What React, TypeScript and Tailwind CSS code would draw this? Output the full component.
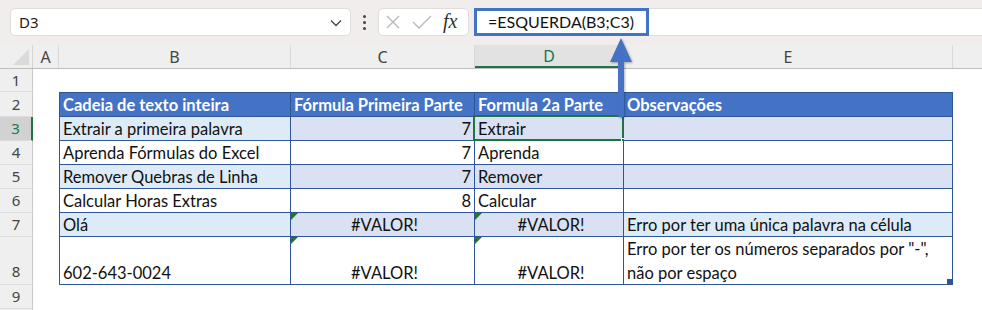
import React from "react"

const cellFont = { fontFamily: "Lato, 'Liberation Sans', sans-serif" }
const uiFont = { fontFamily: "'Noto Sans', 'Open Sans', sans-serif" }

const cols = [
  { key: "A", w: "w-[26px]" },
  { key: "B", w: "w-[232px]" },
  { key: "C", w: "w-[184px]" },
  { key: "D", w: "w-[149px]" },
  { key: "E", w: "w-[329px]" },
]

type Row = {
  n: number
  h: string
  cells: string[]
  fills?: string[]
  kind?: "head" | "err" | "tall"
}

const band = ["bg-[#ddebf7]", "bg-[#d9e1f2]", "bg-[#d9e1f2]", "bg-[#d9e1f2]"]

const rows: Row[] = [
  { n: 2, h: "h-[25px]", kind: "head", cells: ["Cadeia de texto inteira", "Fórmula Primeira Parte", "Formula 2a Parte", "Observações"] },
  { n: 3, h: "h-[24px]", cells: ["Extrair a primeira palavra", "7", "Extrair", ""], fills: band },
  { n: 4, h: "h-[24px]", cells: ["Aprenda Fórmulas do Excel", "7", "Aprenda", ""] },
  { n: 5, h: "h-[24px]", cells: ["Remover Quebras de Linha", "7", "Remover", ""], fills: band },
  { n: 6, h: "h-[24px]", cells: ["Calcular Horas Extras", "8", "Calcular", ""] },
  { n: 7, h: "h-[24px]", kind: "err", cells: ["Olá", "#VALOR!", "#VALOR!", "Erro por ter uma única palavra na célula"], fills: ["bg-[#ddebf7]", "bg-[#d9e1f2]", "bg-[#d9e1f2]", "bg-[#ddebf7]"] },
  { n: 8, h: "h-[48px]", kind: "tall", cells: ["602-643-0024", "#VALOR!", "#VALOR!", "Erro por ter os números separados por \"-\", não por espaço"] },
]

function ErrTri() {
  return <span className="absolute left-0 top-0 w-0 h-0 border-t-[7px] border-r-[7px] border-t-[#1e7b1e] border-r-transparent" />
}

function RowHead({ n, h, active }: { n: number | string; h: string; active?: boolean }) {
  return (
    <div
      className={`${h} w-[33px] shrink-0 flex justify-center border-b border-[#dcdcdc] text-[15px] ${
        active ? "bg-[#d2d2d2] text-[#217346] border-r-2 border-r-[#217346]" : "bg-[#efefef] text-[#444] border-r border-r-[#c8c8c8]"
      } ${n === 8 ? "items-end pb-[2px]" : "items-center"}`}
      style={uiFont}
    >
      {n}
    </div>
  )
}

export default function App() {
  return (
    <div className="relative w-[982px] h-[310px] overflow-hidden bg-white">
      {/* formula bar */}
      <div className="h-[45px] bg-[#f2eded] flex items-start pt-[8px] pl-[10px]">
        <div className="w-[341px] h-[28px] bg-white rounded-[5px] border border-[#e2dcdc] flex items-center justify-between pl-[8px] pr-[8px]" style={uiFont}>
          <span className="text-[15px] text-[#222]">D3</span>
          <svg width="12" height="8" viewBox="0 0 12 8" className="mt-[2px]">
            <path d="M1 1.5 L6 6.5 L11 1.5" stroke="#444" strokeWidth="1.3" fill="none" />
          </svg>
        </div>
        <div className="w-[27px] h-[28px] flex flex-col items-center justify-center gap-[3px]">
          <span className="w-[3px] h-[3px] bg-[#444] rounded-full" />
          <span className="w-[3px] h-[3px] bg-[#444] rounded-full" />
          <span className="w-[3px] h-[3px] bg-[#444] rounded-full" />
        </div>
        <div className="w-[91px] h-[28px] bg-white rounded-[5px] border border-[#e2dcdc] flex items-center pl-[6px] gap-[11px]">
          <svg width="16" height="16" viewBox="0 0 16 16">
            <path d="M2 2 L14 14 M14 2 L2 14" stroke="#b8b8b8" strokeWidth="1.3" />
          </svg>
          <svg width="20" height="16" viewBox="0 0 20 16">
            <path d="M1 8 L7 14 L19 2" stroke="#b8b8b8" strokeWidth="1.3" fill="none" />
          </svg>
          <span className="text-[20px] italic text-[#333] leading-none -mt-[2px]" style={{ fontFamily: "'Liberation Serif', serif" }}>
            fx
          </span>
        </div>
        <div className="ml-[5px] flex-1 h-[28px] bg-white border-y border-[#e2dcdc] flex">
          <div className="w-[175px] h-[28px] -mt-[1px] border-[3px] border-[#4472c4] flex items-center pl-[11px] text-[16px] text-[#111]" style={cellFont}>
            =ESQUERDA(B3;C3)
          </div>
        </div>
      </div>

      {/* column headers */}
      <div className="h-[24px] flex bg-[#efefef] border-b border-[#bdbdbd] text-[16px] text-[#444]" style={uiFont}>
        <div className="w-[33px] shrink-0 relative border-r border-[#d4d4d4]">
          <svg className="absolute right-[3px] bottom-[3px]" width="16" height="16" viewBox="0 0 16 16">
            <path d="M16 0 L16 16 L0 16 Z" fill="#dadada" />
          </svg>
        </div>
        {cols.map((c) => (
          <div
            key={c.key}
            className={`${c.w} shrink-0 flex items-center justify-center border-r border-[#d9d9d9] ${
              c.key === "D" ? "bg-[#e2e2e2] text-[#217346] border-b-2 border-b-[#217346]" : ""
            }`}
          >
            {c.key}
          </div>
        ))}
        <div className="flex-1" />
      </div>

      {/* row 1 */}
      <div className="flex">
        <RowHead n={1} h="h-[23px]" />
      </div>

      {/* table rows */}
      {rows.map((r) => (
        <div key={r.n} className="flex" style={cellFont}>
          <RowHead n={r.n} h={r.h} active={r.n === 3} />
          <div className="w-[26px] shrink-0" />
          {r.cells.map((txt, i) => {
            const w = ["w-[232px]", "w-[184px]", "w-[149px]", "w-[329px]"][i]
            const fill = r.kind === "head" ? "bg-[#4472c4]" : r.fills ? r.fills[i] : "bg-white"
            const isErr = (r.kind === "err" || r.kind === "tall") && (i === 1 || i === 2)
            const align = r.kind === "head" ? "justify-start" : i === 1 && !isErr ? "justify-end" : isErr ? "justify-center" : "justify-start"
            return (
              <div
                key={i}
                className={`${w} ${r.h} shrink-0 relative flex ${r.kind === "tall" && i !== 3 ? "items-end" : "items-center"} ${align} ${fill} border-r border-b border-[#2f5597] ${
                  i === 0 ? "border-l" : ""
                } ${r.kind === "head" ? "border-t font-bold text-white" : "text-[#111]"} px-[3px] text-[16.5px] leading-[22px]`}
              >
                {isErr && <ErrTri />}
                {i === 3 && r.kind === "tall" ? (
                  <span className="leading-[24px] pt-[1px]">{txt}</span>
                ) : (
                  <span className={isErr ? "pl-[4px]" : ""}>{txt}</span>
                )}
                {r.n === 3 && i === 2 && (
                  <>
                    <span className="absolute -left-[2px] -top-[2px] -right-[1px] -bottom-[1px] border-2 border-[#217346]" />
                    <span className="absolute -right-[4px] -bottom-[4px] w-[6px] h-[6px] bg-[#217346] border border-white" />
                  </>
                )}
                {r.n === 8 && i === 3 && <span className="absolute right-0 bottom-0 w-[5px] h-[5px] bg-[#2f5597]" />}
              </div>
            )
          })}
        </div>
      ))}

      {/* row 9 */}
      <div className="flex">
        <RowHead n={9} h="h-[24px]" />
      </div>
      <div className="flex">
        <RowHead n={""} h="h-[24px]" />
      </div>

      {/* callout arrow */}
      <svg className="absolute left-[608px] top-[36px]" width="28" height="86" viewBox="0 0 28 86">
        <defs>
          <filter id="sh" x="-50%" y="-20%" width="200%" height="140%">
            <feDropShadow dx="1" dy="1" stdDeviation="1" floodColor="#000" floodOpacity="0.3" />
          </filter>
        </defs>
        <path d="M13 2 L24 26 L16 26 L16 80 Q13 83 10 80 L10 26 L2 26 Z" fill="#4472c4" filter="url(#sh)" />
      </svg>
    </div>
  )
}
